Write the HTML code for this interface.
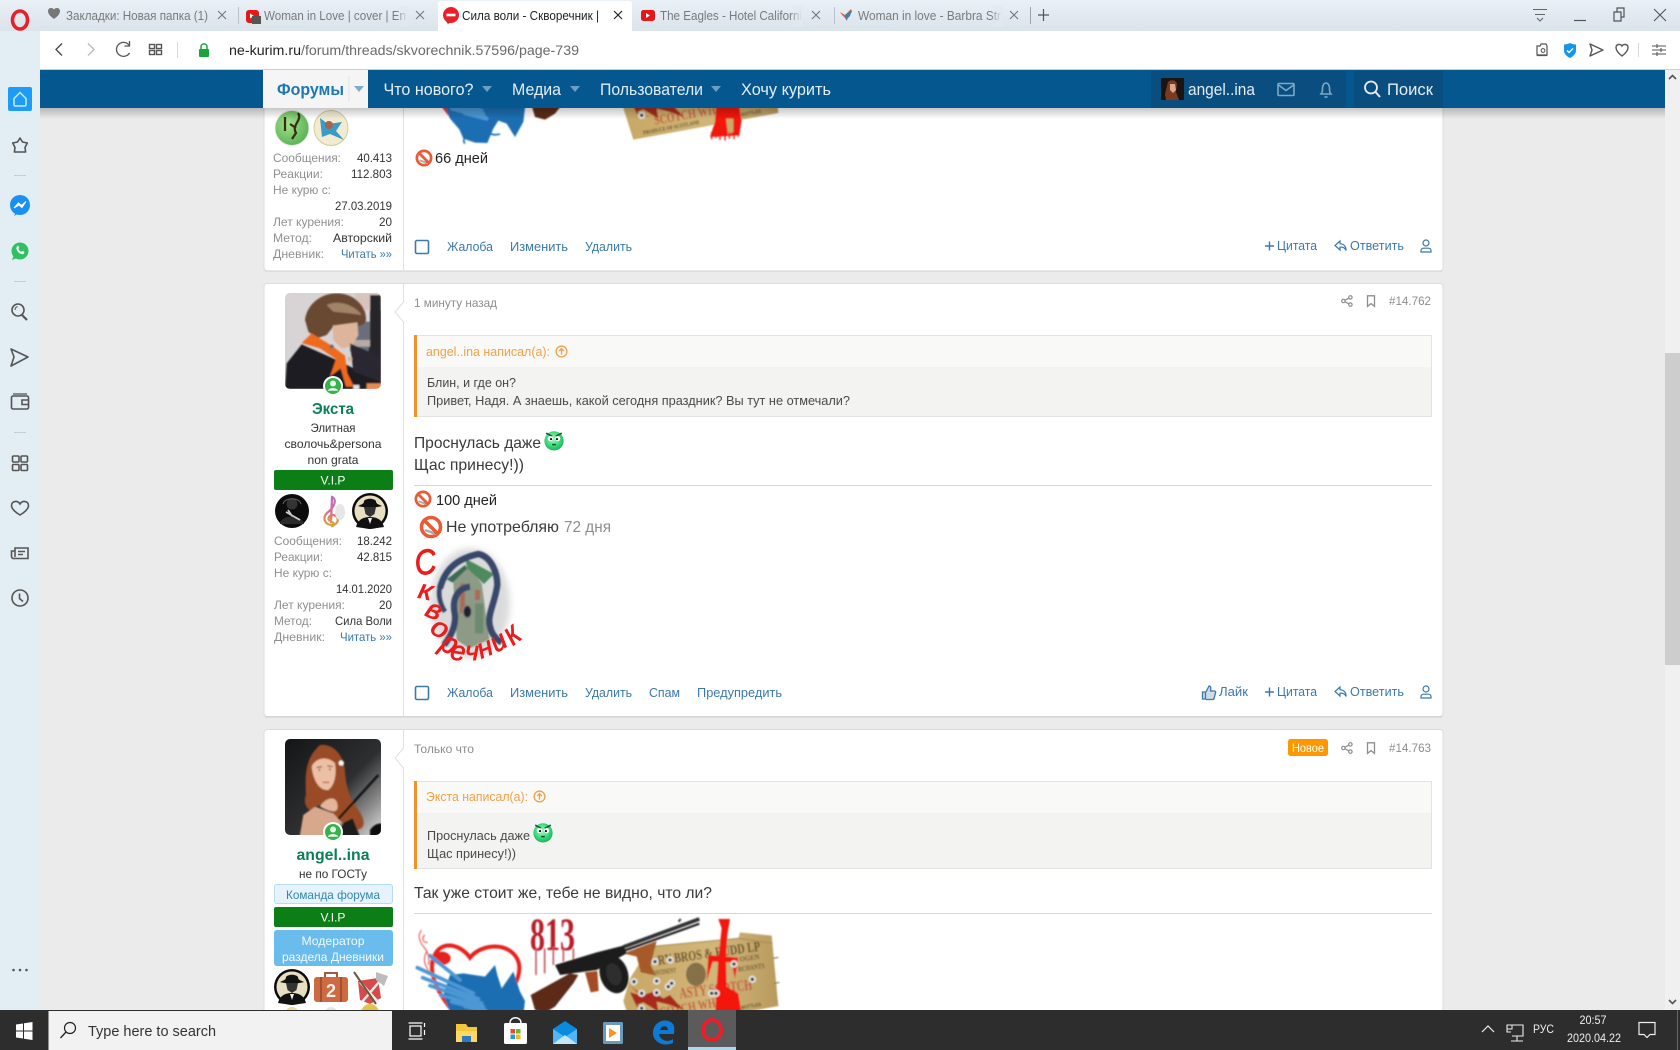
<!DOCTYPE html>
<html lang="ru"><head><meta charset="utf-8"><title>Сила воли - Скворечник</title>
<style>
html,body{margin:0;padding:0;width:1680px;height:1050px;overflow:hidden;background:#ebebeb}
svg{display:block;font-family:"Liberation Sans","DejaVu Sans",sans-serif;filter:blur(.3px)}
.tab{font-size:13px;fill:#7a7a7a}
.l{font-size:12px;fill:#8f8f8f}
.v{font-size:12px;fill:#333}
.a{font-size:13px;fill:#3b78ab}
.m{font-size:16px;fill:#3a3a3a}
.q{font-size:13px;fill:#4a4a4a}
.o{font-size:13px;fill:#f2a045}
.nav{font-size:17px;fill:#e3edf5}
.g{font-size:12px;fill:#8d8d8d}
.c{text-anchor:middle}
.ic{fill:none;stroke:#555;stroke-width:1.4}
.is{fill:none;stroke:#555;stroke-width:1.6}
.rl{font-size:27px;font-style:italic;text-anchor:middle;fill:#ea1c1c;stroke:#ea1c1c;stroke-width:.7}
</style></head><body>
<svg xmlns="http://www.w3.org/2000/svg" width="1680" height="1050" viewBox="0 0 1680 1050">
<defs>
<linearGradient id="tb" x1="0" y1="0" x2="0" y2="1"><stop offset="0" stop-color="#e9f0f6"/><stop offset="1" stop-color="#dbe3eb"/></linearGradient>
<linearGradient id="sh" x1="0" y1="0" x2="0" y2="1"><stop offset="0" stop-color="#000" stop-opacity=".22"/><stop offset="1" stop-color="#000" stop-opacity="0"/></linearGradient>
<linearGradient id="fade" x1="0" y1="0" x2="1" y2="0"><stop offset="0" stop-color="#e2e9f0" stop-opacity="0"/><stop offset="1" stop-color="#e2e9f0"/></linearGradient>
<radialGradient id="sm" cx=".45" cy=".4" r=".6"><stop offset="0" stop-color="#b6f5c8"/><stop offset=".6" stop-color="#3bdc7c"/><stop offset="1" stop-color="#19b35f"/></radialGradient>
<radialGradient id="gm" cx=".4" cy=".4" r=".7"><stop offset="0" stop-color="#a4e08a"/><stop offset="1" stop-color="#4fae4f"/></radialGradient>
<linearGradient id="av2" x1="0" y1="0" x2="1" y2="1"><stop offset="0" stop-color="#141517"/><stop offset=".55" stop-color="#2e2f31"/><stop offset=".8" stop-color="#8c8c8c"/><stop offset="1" stop-color="#dcdcdc"/></linearGradient>
<linearGradient id="cl" x1="0" y1="0" x2="0" y2="1"><stop offset="0" stop-color="#b56fc9"/><stop offset=".5" stop-color="#d86b8e"/><stop offset="1" stop-color="#d9a832"/></linearGradient>
<linearGradient id="cr" x1="0" y1="0" x2="1" y2="0"><stop offset="0" stop-color="#c7a765"/><stop offset=".6" stop-color="#d2b679"/><stop offset="1" stop-color="#b89a5e"/></linearGradient>
<filter id="b2" x="-10%" y="-10%" width="120%" height="120%"><feGaussianBlur stdDeviation="2.200"/></filter>
<filter id="b4" x="-20%" y="-20%" width="140%" height="140%"><feGaussianBlur stdDeviation="10"/></filter>
<clipPath id="cA1"><rect x="285" y="293" width="96" height="96" rx="5"/></clipPath>
<clipPath id="cA2"><rect x="285" y="739" width="96" height="96" rx="5"/></clipPath>
<clipPath id="cA3"><rect x="1161" y="78" width="23" height="22" rx="1"/></clipPath>

<symbol id="nosmoke" viewBox="0 0 24 24" overflow="visible">
<circle cx="12" cy="12" r="9.500" fill="#fff" stroke="#ea5a35" stroke-width="3.600"/>
<path d="M6 15l11 4" stroke="#aaa" stroke-width="2.500"/>
<path d="M5 5l14 14" stroke="#ea5a35" stroke-width="3.600"/>
</symbol>
<symbol id="smile" viewBox="0 0 24 24" overflow="visible">
<circle cx="12" cy="13" r="10.500" fill="url(#sm)"/>
<path d="M3.500 4.500l6.500 3.500M20.500 4.500l-6.500 3.500" stroke="#135f33" stroke-width="1.800"/>
<circle cx="8" cy="10.500" r="2.800" fill="#fff"/><circle cx="16" cy="10.500" r="2.800" fill="#fff"/>
<circle cx="8.800" cy="11" r="1.200" fill="#111"/><circle cx="15.200" cy="11" r="1.200" fill="#111"/>
<path d="M10 17h4" stroke="#0b4d28" stroke-width="1.600"/>
</symbol>
<symbol id="online" viewBox="0 0 20 20" overflow="visible">
<circle cx="10" cy="10" r="10" fill="#fff"/><circle cx="10" cy="10" r="8" fill="#35b34a"/>
<circle cx="10" cy="7.500" r="3" fill="#eaf8ec"/><path d="M4.800 14.800c1-3.600 9.400-3.600 10.400 0z" fill="#eaf8ec"/>
</symbol>
<symbol id="up" viewBox="0 0 12 12" overflow="visible">
<circle cx="6" cy="6" r="5" fill="none" stroke="#f2a045" stroke-width="1.200"/><path d="M6 9V3.500M3.800 5.600 6 3.300l2.200 2.300" fill="none" stroke="#f2a045" stroke-width="1.200"/>
</symbol>
<symbol id="share" viewBox="0 0 12 12" overflow="visible">
<g fill="none" stroke="#8d8d8d" stroke-width="1.200"><circle cx="2.400" cy="6" r="1.700"/><circle cx="9.400" cy="2.400" r="1.700"/><circle cx="9.400" cy="9.600" r="1.700"/><path d="M4 5.200 7.800 3.200M4 6.800l3.800 2"/></g>
</symbol>
<symbol id="bm" viewBox="0 0 12 12" overflow="visible">
<path d="M2.500 .8h7v10.600L6 8.600l-3.500 2.800z" fill="none" stroke="#8d8d8d" stroke-width="1.300"/>
</symbol>
<symbol id="reply" viewBox="0 0 14 14" overflow="visible">
<path d="M6 2 1 6.500 6 11V8.200c3-.3 5 .6 6 3.300 .3-4-2-6.500-6-6.800z" fill="none" stroke="#3b78ab" stroke-width="1.200"/>
</symbol>
<symbol id="person" viewBox="0 0 12 14" overflow="visible">
<g fill="none" stroke="#3b78ab" stroke-width="1.200"><circle cx="6" cy="4" r="3"/><path d="M1 13v-1.400c0-1.500 1.200-2.400 2.600-2.400h4.800c1.400 0 2.600.9 2.600 2.400V13z"/></g>
</symbol>

<g id="sig"><g transform="translate(410 915) scale(.33333)"><g filter="url(#b2)">
<path d="M35 45C20 60 30 85 45 100 55 115 60 130 55 150M45 60c-12 8-6 25 8 22M50 110c-18 30 5 70 35 75" fill="none" stroke="#e6201d" stroke-width="2.500"/>
<path d="M180 128C150 85 90 75 72 125 52 172 82 240 150 312L190 350 225 318C300 250 345 180 322 132 295 80 215 85 180 128z" fill="none" stroke="#e6201d" stroke-width="12"/>
<ellipse cx="95" cy="130" rx="27" ry="20" fill="#e6201d"/>
<path d="M120 180 160 175 225 185 255 150 262 180 275 220 310 170 330 230 345 258 340 300 315 345 290 305 265 296 250 320 232 363 195 362 160 350 148 322 120 290 100 240z" fill="#1a6eb3"/>
<g stroke="#4b98d4" stroke-width="11" stroke-linecap="round"><path d="M60 122 150 195M22 158 190 235M38 188 205 252M60 212 215 265M92 240 220 275M125 260 225 285M165 274 230 290"/></g>
<path d="M225 318c10 15 20 25 45 18M165 345c-5 10-5 15 0 20" fill="none" stroke="#1a6eb3" stroke-width="5"/>

<text x="360" y="105" font-family="'Liberation Serif',serif" font-weight="bold" font-size="140" fill="#b81d26" textLength="135" lengthAdjust="spacingAndGlyphs">813</text>
<path d="M378 100v80M404 100v75M430 95v55M460 100v40M490 100v35" stroke="#c95a5f" stroke-width="5"/>

<path d="M720 95 985 70 990 52 1085 62 1105 273 670 353 640 258 660 190z" fill="url(#cr)"/>
<path d="M985 70 1088 85M720 95 985 70" stroke="#a58a50" stroke-width="3"/>
<path d="M1090 130l15-3M1093 205l15-3" stroke="#7d6a45" stroke-width="3"/>
<text x="745" y="150" transform="rotate(-8 745 150)" font-family="'Liberation Serif',serif" font-weight="bold" font-size="42" fill="#5d4a26" textLength="310" lengthAdjust="spacingAndGlyphs">RY BROS &amp; RUDD LP</text>
<text x="730" y="182" transform="rotate(-8 730 182)" font-family="'Liberation Serif',serif" font-weight="bold" font-size="22" fill="#6b5630" textLength="70" lengthAdjust="spacingAndGlyphs">ONTINENT</text>
<text x="985" y="170" transform="rotate(-8 985 170)" font-family="'Liberation Serif',serif" font-weight="bold" font-size="22" fill="#6b5630" textLength="80" lengthAdjust="spacingAndGlyphs">RCHANTS</text>
<text x="990" y="140" transform="rotate(-8 990 140)" font-family="'Liberation Serif',serif" font-weight="bold" font-size="22" fill="#6b5630" textLength="60" lengthAdjust="spacingAndGlyphs">OGEN</text>
<ellipse cx="858" cy="178" rx="30" ry="35" fill="#6e5a3a" opacity=".75"/>
<text x="810" y="250" transform="rotate(-7 810 250)" font-family="'Liberation Serif',serif" font-weight="bold" font-size="46" fill="#c75a3c" textLength="220" lengthAdjust="spacingAndGlyphs">ASTY SCOTCH</text>
<text x="735" y="308" transform="rotate(-10 735 308)" font-family="'Liberation Serif',serif" font-weight="bold" font-size="40" fill="#c75a3c" textLength="260" lengthAdjust="spacingAndGlyphs">SCOTCH WHISKY</text>
<text x="700" y="338" transform="rotate(-11 700 338)" font-family="'Liberation Serif',serif" font-weight="bold" font-size="17" fill="#5d4a26" textLength="172" lengthAdjust="spacingAndGlyphs">PRODUCE OF SCOTLAND</text>
<text x="995" y="283" transform="rotate(-10 995 283)" font-family="'Liberation Sans',sans-serif" font-weight="bold" font-size="15" fill="#5d4a26" textLength="60" lengthAdjust="spacingAndGlyphs">BOTTLES</text>
<path d="M662 215 700 240 730 230 760 250 780 240 820 285 780 270 740 260 745 290 700 262 680 270 720 285 680 275 660 232 690 240z" fill="#a92a1a"/>
<path d="M925 12 960 12 952 60 948 130 950 215 985 235 995 295 988 340 900 345 915 300 925 130 935 40z" fill="#f2150f"/>
<path d="M895 120 985 128 975 192 965 142 908 140 890 200z" fill="#f2150f"/>
<path d="M948 290h22v40l-16 8z" fill="#c9aa6a"/>
<path d="M905 330v22M918 330v18M930 330v24M945 330v26M958 330v20M972 330v22M985 330v14" stroke="#f2150f" stroke-width="4"/>
<g><g fill="#e4e4e4"><circle cx="735" cy="140" r="11"/><circle cx="780" cy="135" r="11"/><circle cx="672" cy="200" r="11"/><circle cx="740" cy="198" r="11"/><circle cx="785" cy="205" r="11"/><circle cx="775" cy="215" r="11"/><circle cx="695" cy="235" r="11"/><circle cx="740" cy="233" r="11"/><circle cx="905" cy="235" r="11"/><circle cx="918" cy="235" r="11"/><circle cx="972" cy="147" r="11"/><circle cx="1027" cy="193" r="11"/><circle cx="695" cy="280" r="11"/></g>
<g fill="#222"><circle cx="735" cy="140" r="5"/><circle cx="780" cy="135" r="5"/><circle cx="672" cy="200" r="5"/><circle cx="740" cy="198" r="5"/><circle cx="785" cy="205" r="5"/><circle cx="775" cy="215" r="5"/><circle cx="695" cy="235" r="5"/><circle cx="740" cy="233" r="5"/><circle cx="905" cy="235" r="5"/><circle cx="918" cy="235" r="5"/><circle cx="972" cy="147" r="5"/><circle cx="1027" cy="193" r="5"/><circle cx="695" cy="280" r="5"/></g></g>

<path d="M640 115 740 78 722 150 738 182 692 172 680 125z" fill="#a65a2c"/>
<path d="M868 12 640 96" stroke="#333" stroke-width="11"/><path d="M806 20l6-8" stroke="#333" stroke-width="6"/>
<path d="M868 26 640 108" stroke="#222" stroke-width="7"/>
<path d="M435 150 560 112 640 92 650 115 560 165 450 180z" fill="#1f1f1f"/>
<ellipse cx="612" cy="178" rx="42" ry="58" transform="rotate(-18 612 178)" fill="#1d1d1d"/><ellipse cx="612" cy="178" rx="22" ry="34" transform="rotate(-18 612 178)" fill="#2f2f2f"/>
<path d="M525 172 562 168 566 228 542 232z" fill="#a34b20"/>
<path d="M362 240 480 175 505 180 490 205 435 275 405 293 375 285z" fill="#5c2c15"/>
</g></g></g>
</defs>

<!-- page background -->
<rect width="1680" height="1050" fill="#ebebeb"/>

<!-- POST 0 -->
<rect x="264" y="100" width="1179" height="171" rx="3" fill="#fff" stroke="#dcdcdc"/>
<path d="M265 271H1442" stroke="#cfcfcf"/>
<path d="M403.500 100V270" stroke="#e0e0e0"/>
<use href="#sig" y="-893"/>
<ellipse cx="292" cy="128" rx="17" ry="17.500" fill="url(#gm)" stroke="#e8e8e8"/>
<path d="M285 117v14M298 113c5 7-7 12-2 20l-4 6M296 128l-6-4" stroke="#3a2a10" stroke-width="2.200" fill="none"/>
<ellipse cx="331" cy="128" rx="17" ry="17.500" fill="#f2ebd2" stroke="#d8c99a"/>
<path d="M320 118 328 124 342 122 336 131 344 140 330 134 322 137z" fill="#3b9bc4"/><circle cx="329" cy="125" r="4" fill="#a0664e"/>
<text x="273" y="162" class="l" textLength="68" lengthAdjust="spacingAndGlyphs">Сообщения:</text><text x="392" y="162" class="v" text-anchor="end" textLength="35" lengthAdjust="spacingAndGlyphs">40.413</text>
<text x="273" y="178" class="l" textLength="50" lengthAdjust="spacingAndGlyphs">Реакции:</text><text x="392" y="178" class="v" text-anchor="end" textLength="41" lengthAdjust="spacingAndGlyphs">112.803</text>
<text x="273" y="194" class="l" textLength="58" lengthAdjust="spacingAndGlyphs">Не курю с:</text>
<text x="392" y="210" class="v" text-anchor="end" textLength="57" lengthAdjust="spacingAndGlyphs">27.03.2019</text>
<text x="273" y="226" class="l" textLength="71" lengthAdjust="spacingAndGlyphs">Лет курения:</text><text x="392" y="226" class="v" text-anchor="end" textLength="13" lengthAdjust="spacingAndGlyphs">20</text>
<text x="273" y="242" class="l" textLength="39" lengthAdjust="spacingAndGlyphs">Метод:</text><text x="392" y="242" class="v" text-anchor="end" textLength="59" lengthAdjust="spacingAndGlyphs">Авторский</text>
<text x="273" y="258" class="l" textLength="51" lengthAdjust="spacingAndGlyphs">Дневник:</text><text x="392" y="258" class="a" style="font-size:12px" text-anchor="end" textLength="51" lengthAdjust="spacingAndGlyphs">Читать »»</text>
<use href="#nosmoke" x="415" y="149" width="18" height="18"/>
<text x="435" y="163" style="font-size:15px;fill:#222" textLength="53" lengthAdjust="spacingAndGlyphs">66 дней</text>
<rect x="415.500" y="240.500" width="13" height="13" rx="1.500" fill="none" stroke="#3b78ab" stroke-width="1.600"/>
<text x="447" y="251" class="a" textLength="46" lengthAdjust="spacingAndGlyphs">Жалоба</text>
<text x="510" y="251" class="a" textLength="58" lengthAdjust="spacingAndGlyphs">Изменить</text>
<text x="585" y="251" class="a" textLength="47" lengthAdjust="spacingAndGlyphs">Удалить</text>
<path d="M1265 246h9M1269.500 241.500v9" stroke="#3b78ab" stroke-width="1.400"/>
<text x="1277" y="250" class="a" textLength="40" lengthAdjust="spacingAndGlyphs">Цитата</text>
<use href="#reply" x="1334" y="239" width="14" height="14"/>
<text x="1350" y="250" class="a" textLength="54" lengthAdjust="spacingAndGlyphs">Ответить</text>
<use href="#person" x="1420" y="239" width="12" height="14"/>

<!-- POST 1 -->
<rect x="264" y="283.500" width="1179" height="433" rx="3" fill="#fff" stroke="#dcdcdc"/>
<path d="M265 717H1442" stroke="#cfcfcf"/>
<path d="M403.500 284V716" stroke="#e0e0e0"/>
<path d="M403.500 302 395 312 403.500 322z" fill="#fff" stroke="#e0e0e0"/><path d="M404 303v18" stroke="#fff" stroke-width="2"/>
<g clip-path="url(#cA1)">
<rect x="285" y="293" width="96" height="96" fill="#d8d4d6"/>
<g transform="translate(270 285) scale(.33333)"><g filter="url(#b2)">
<rect x="255" y="25" width="80" height="50" fill="#d9c4bd"/>
<rect x="240" y="110" width="70" height="90" fill="#6a6e7c"/>
<path d="M300 30 333 30 333 290 280 290 300 170z" fill="#26262b"/>
<path d="M240 165h60v20h-60z" fill="#b7aca5"/>
<path d="M105 105C110 60 150 25 200 25 250 25 290 60 288 105 285 125 265 120 250 125L190 125 170 150 140 160 115 140z" fill="#6a4a30"/>
<path d="M170 60C200 45 250 55 275 90L240 85 190 80z" fill="#a18468"/>
<path d="M188 122 262 112 265 150 245 185 215 190 190 165z" fill="#dcb59b"/>
<path d="M45 312 50 235 95 178 200 225 333 290 333 312z" fill="#1d1c22"/>
<path d="M240 175 333 215 333 290 250 260z" fill="#2a2830"/>
<path d="M95 174 125 145 185 182 225 212 232 265 252 305 228 305 212 250 180 275 198 222 150 190z" fill="#ee6a1f"/>
<circle cx="240" cy="222" r="7" fill="#d9b59a"/><circle cx="185" cy="185" r="6" fill="#6a6a6a"/>
<path d="M290 295h43v17h-43z" fill="#e88a50"/>
<path d="M250 300h18v12h-18z" fill="#e0e0e0"/>
</g></g>
</g>
<use href="#online" x="323" y="376" width="20" height="20"/>
<text x="333" y="414" class="c" style="font-size:16px;font-weight:bold;fill:#0b7f59" textLength="42" lengthAdjust="spacingAndGlyphs">Экста</text>
<text x="333" y="432" class="c" style="font-size:12px;fill:#333" textLength="45" lengthAdjust="spacingAndGlyphs">Элитная</text>
<text x="333" y="448" class="c" style="font-size:12px;fill:#333" textLength="97" lengthAdjust="spacingAndGlyphs">сволочь&amp;persona</text>
<text x="333" y="464" class="c" style="font-size:12px;fill:#333" textLength="51" lengthAdjust="spacingAndGlyphs">non grata</text>
<rect x="274" y="470" width="119" height="20" rx="2" fill="#0b7f16"/>
<text x="333" y="484.500" class="c" style="font-size:12px;fill:#fff">V.I.P</text>
<circle cx="292" cy="511" r="17" fill="#0c0c0c"/><circle cx="292" cy="504" r="5.500" fill="#333"/><path d="M283 504c2-7 16-7 18 0" fill="none" stroke="#666"/><path d="M280 524c1-10 22-10 24 0z" fill="#2a2a2a"/><path d="M286 512l14 8M288 510l4 6" stroke="#ccc" stroke-width="1.800"/>
<path d="M331 526C335 527 335 522 331 522L332 497C337 499 335 507 327 513 322 518 325 525 332 525 339 525 340 516 333 515 329 515 327 519 330 521" fill="none" stroke="url(#cl)" stroke-width="2.200"/><ellipse cx="340" cy="512" rx="5" ry="8" fill="#e6e6e6"/>
<circle cx="370" cy="511" r="18" fill="#0c0c0c"/><circle cx="370" cy="511" r="15.500" fill="#e8dfc0"/><path d="M358 506c4-2 6-2 6-5 2-3 10-3 12 0 0 3 2 3 6 5-6 2-18 2-24 0z" fill="#111"/><path d="M364 507h12l-1.500 7-4.500 3-4.500-3z" fill="#333"/><path d="M356 527c2-8 8-10 14-10s12 2 14 10l-14 2z" fill="#111"/><path d="M368 518h4l-2 6z" fill="#eee"/>
<text x="274" y="545" class="l" textLength="68" lengthAdjust="spacingAndGlyphs">Сообщения:</text><text x="392" y="545" class="v" text-anchor="end" textLength="35" lengthAdjust="spacingAndGlyphs">18.242</text>
<text x="274" y="561" class="l" textLength="49" lengthAdjust="spacingAndGlyphs">Реакции:</text><text x="392" y="561" class="v" text-anchor="end" textLength="35" lengthAdjust="spacingAndGlyphs">42.815</text>
<text x="274" y="577" class="l" textLength="58" lengthAdjust="spacingAndGlyphs">Не курю с:</text>
<text x="392" y="593" class="v" text-anchor="end" textLength="56" lengthAdjust="spacingAndGlyphs">14.01.2020</text>
<text x="274" y="609" class="l" textLength="71" lengthAdjust="spacingAndGlyphs">Лет курения:</text><text x="392" y="609" class="v" text-anchor="end" textLength="13" lengthAdjust="spacingAndGlyphs">20</text>
<text x="274" y="625" class="l" textLength="38" lengthAdjust="spacingAndGlyphs">Метод:</text><text x="392" y="625" class="v" text-anchor="end" textLength="57" lengthAdjust="spacingAndGlyphs">Сила Воли</text>
<text x="274" y="641" class="l" textLength="51" lengthAdjust="spacingAndGlyphs">Дневник:</text><text x="392" y="641" class="a" style="font-size:12px" text-anchor="end" textLength="52" lengthAdjust="spacingAndGlyphs">Читать »»</text>

<text x="414" y="307" class="g" textLength="83" lengthAdjust="spacingAndGlyphs">1 минуту назад</text>
<use href="#share" x="1341" y="295" width="12" height="12"/>
<use href="#bm" x="1365" y="295" width="12" height="12"/>
<text x="1389" y="305" class="g" textLength="42" lengthAdjust="spacingAndGlyphs">#14.762</text>

<rect x="414.500" y="335.500" width="1017" height="81" fill="#f3f3f1" stroke="#e3e3e1"/>
<rect x="417" y="336" width="1014" height="31" fill="#f9f9f8"/>
<rect x="414" y="335" width="3" height="82" fill="#f0932b"/>
<text x="426" y="356" class="o" textLength="124" lengthAdjust="spacingAndGlyphs">angel..ina написал(а):</text>
<use href="#up" x="555" y="345" width="13" height="13"/>
<text x="427" y="387" class="q" textLength="89" lengthAdjust="spacingAndGlyphs">Блин, и где он?</text>
<text x="427" y="405" class="q" textLength="423" lengthAdjust="spacingAndGlyphs">Привет, Надя. А знаешь, какой сегодня праздник? Вы тут не отмечали?</text>
<text x="414" y="448" class="m" textLength="127" lengthAdjust="spacingAndGlyphs">Проснулась даже</text>
<use href="#smile" x="543" y="429" width="22" height="22"/>
<text x="414" y="470" class="m" textLength="110" lengthAdjust="spacingAndGlyphs">Щас принесу!))</text>
<path d="M414 485.500H1432" stroke="#d8d8d8"/>
<use href="#nosmoke" x="414" y="490" width="18" height="18"/>
<text x="436" y="505" style="font-size:15px;fill:#222" textLength="61" lengthAdjust="spacingAndGlyphs">100 дней</text>
<use href="#nosmoke" x="419" y="515" width="24" height="24"/>
<text x="446" y="532" style="font-size:16px;fill:#3a3a3a" textLength="113" lengthAdjust="spacingAndGlyphs">Не употребляю</text>
<text x="564" y="532" style="font-size:16px;fill:#8c8c8c" textLength="47" lengthAdjust="spacingAndGlyphs">72 дня</text>

<!-- birdhouse -->
<g transform="translate(410 540) scale(.33333)">
<ellipse cx="180" cy="190" rx="120" ry="165" fill="#bdbdbd" opacity=".55" filter="url(#b4)"/>
<g filter="url(#b2)">
<path d="M130 125 175 80 215 130 238 298 178 325 140 300z" fill="#8d9a86"/>
<path d="M150 130h15v90h-15zM195 150h15v30h-15z" fill="#a86a58"/>
<path d="M195 190h25v90h-25z" fill="#6d8a70"/>
<path d="M165 75 110 118 128 128 172 85z" fill="#3d6b52"/><path d="M165 55 252 102 222 132 172 85z" fill="#4e8a5c"/>
<path d="M90 145C105 85 145 55 205 42 245 50 262 100 262 135 255 190 230 225 240 260 245 285 262 300 275 308" fill="none" stroke="#39476b" stroke-width="19"/>
<path d="M180 140C140 145 125 180 135 225 138 265 118 295 102 315" fill="none" stroke="#39476b" stroke-width="19"/>
<path d="M90 140C82 170 95 200 105 215" fill="none" stroke="#39476b" stroke-width="14"/>
<ellipse cx="172" cy="215" rx="13" ry="19" fill="#1c2434" stroke="#8a8a7a" stroke-width="4"/>
</g></g>
<text class="rl" transform="translate(427 574) rotate(-8) scale(1.100 1.300)">С</text>
<text class="rl" transform="translate(424 599) rotate(12) scale(1.100 1)">к</text>
<text class="rl" transform="translate(431 618) rotate(22) scale(1.100 1)">в</text>
<text class="rl" transform="translate(436 636) rotate(28) scale(1.100 1)">о</text>
<text class="rl" transform="translate(445 652) rotate(30) scale(1 1.100)">р</text>
<text class="rl" transform="translate(457 660) rotate(8)">е</text>
<text class="rl" transform="translate(472 660) rotate(0)">ч</text>
<text class="rl" transform="translate(488 656) rotate(-22)">н</text>
<text class="rl" transform="translate(503 649) rotate(-32)">и</text>
<text class="rl" transform="translate(518 642) rotate(-38) scale(1 1.200)">к</text>

<rect x="415.500" y="686.500" width="13" height="13" rx="1.500" fill="none" stroke="#3b78ab" stroke-width="1.600"/>
<text x="447" y="697" class="a" textLength="46" lengthAdjust="spacingAndGlyphs">Жалоба</text>
<text x="510" y="697" class="a" textLength="58" lengthAdjust="spacingAndGlyphs">Изменить</text>
<text x="585" y="697" class="a" textLength="47" lengthAdjust="spacingAndGlyphs">Удалить</text>
<text x="649" y="697" class="a" textLength="31" lengthAdjust="spacingAndGlyphs">Спам</text>
<text x="697" y="697" class="a" textLength="85" lengthAdjust="spacingAndGlyphs">Предупредить</text>
<path d="M1202.500 692v7h3v-7zM1206 692l3-6c2 0 2 2 1.500 5h4c1 0 1.500 1 1 2l-1.500 5.500c-.3.8-.8 1-1.500 1H1206" fill="#3b78ab" stroke="#3b78ab" stroke-width="1.300" fill-opacity=".25"/>
<text x="1219" y="696" class="a" textLength="29" lengthAdjust="spacingAndGlyphs">Лайк</text>
<path d="M1265 692h9M1269.500 687.500v9" stroke="#3b78ab" stroke-width="1.400"/>
<text x="1277" y="696" class="a" textLength="40" lengthAdjust="spacingAndGlyphs">Цитата</text>
<use href="#reply" x="1334" y="685" width="14" height="14"/>
<text x="1350" y="696" class="a" textLength="54" lengthAdjust="spacingAndGlyphs">Ответить</text>
<use href="#person" x="1420" y="685" width="12" height="14"/>

<!-- POST 2 -->
<rect x="264" y="729.500" width="1179" height="340" rx="3" fill="#fff" stroke="#dcdcdc"/>
<path d="M403.500 730V1010" stroke="#e0e0e0"/>
<path d="M403.500 748 395 758 403.500 768z" fill="#fff" stroke="#e0e0e0"/><path d="M404 749v18" stroke="#fff" stroke-width="2"/>
<g clip-path="url(#cA2)">
<rect x="285" y="739" width="96" height="96" fill="url(#av2)"/>
<g transform="translate(270 735) scale(.33333)"><g filter="url(#b2)">
<path d="M90 300 100 240 135 215 190 235 215 262 190 312 88 312z" fill="#d8a88c"/>
<path d="M108 180C105 120 105 70 150 30 190 25 222 60 225 110 228 150 235 185 265 225 290 260 285 285 255 285 225 270 195 245 180 222 165 200 130 215 120 225 108 220 100 200 108 180z" fill="#9a4c28"/>
<path d="M125 95C135 70 170 60 195 85 200 115 195 150 175 165 150 168 130 140 125 95z" fill="#ecc0a4"/>
<path d="M140 98l16-3M172 93l16 2" stroke="#6a3a22" stroke-width="3"/>
<circle cx="148" cy="105" r="2.500" fill="#333"/><circle cx="180" cy="103" r="2.500" fill="#333"/>
<path d="M158 142h20" stroke="#c0645a" stroke-width="4"/>
<path d="M150 215C160 195 190 180 200 200 210 230 195 240 150 215z" fill="#e3b59a"/>
<path d="M325 120 205 252" stroke="#0c0c0c" stroke-width="7"/>
<path d="M195 312 222 262 248 250 268 300 262 312z" fill="#1a1a1a"/>
<circle cx="214" cy="84" r="8" fill="#f5f5f5"/>
<path d="M300 285c10-15 22-20 35-20v47h-35z" fill="#111"/>
</g></g>
</g>
<use href="#online" x="323" y="822" width="20" height="20"/>
<text x="333" y="860" class="c" style="font-size:16px;font-weight:bold;fill:#0b7f59" textLength="73" lengthAdjust="spacingAndGlyphs">angel..ina</text>
<text x="333" y="878" class="c" style="font-size:12px;fill:#333" textLength="68" lengthAdjust="spacingAndGlyphs">не по ГОСТу</text>
<rect x="274.500" y="884.500" width="118" height="19" rx="2.500" fill="#e6f3fd" stroke="#b4dcf7"/>
<text x="333" y="899" class="c" style="font-size:12px;fill:#3286ad" textLength="94" lengthAdjust="spacingAndGlyphs">Команда форума</text>
<rect x="274" y="907" width="119" height="20" rx="2" fill="#0b7f16"/>
<text x="333" y="921.500" class="c" style="font-size:12px;fill:#fff">V.I.P</text>
<rect x="274" y="930" width="119" height="36" rx="3" fill="#69bcec"/>
<text x="333" y="945" class="c" style="font-size:12px;fill:#f3fafe" textLength="63" lengthAdjust="spacingAndGlyphs">Модератор</text>
<text x="333" y="961" class="c" style="font-size:12px;fill:#f3fafe" textLength="102" lengthAdjust="spacingAndGlyphs">раздела Дневники</text>
<circle cx="292" cy="987" r="18" fill="#0c0c0c"/><circle cx="292" cy="987" r="15.500" fill="#e8dfc0"/><path d="M280 982c4-2 6-2 6-5 2-3 10-3 12 0 0 3 2 3 6 5-6 2-18 2-24 0z" fill="#111"/><path d="M286 983h12l-1.500 7-4.500 3-4.500-3z" fill="#333"/><path d="M278 1003c2-8 8-10 14-10s12 2 14 10l-14 2z" fill="#111"/><path d="M290 994h4l-2 6z" fill="#eee"/>
<rect x="314" y="977" width="34" height="25" rx="3" fill="#cd6a42"/><path d="M325 977v-4h12v4" fill="none" stroke="#a5583a" stroke-width="2"/><path d="M321 977v25M341 977v25" stroke="#8e4a2c" stroke-width="1.500"/><text x="331" y="997" class="c" style="font-size:18px;font-weight:bold;fill:#f4f0ea">2</text>
<path d="M358 981 378 978 381 998 370 1004 360 1000z" fill="#d74a4a"/><path d="M360 982 378 1002M379 982 362 1002" stroke="#eee" stroke-width="2.500"/><path d="M354 972 376 1004" stroke="#6b5a3c" stroke-width="2"/><path d="M376 972l12 4-4 10-8-6z" fill="#bcbcbc"/>
<circle cx="370" cy="1013" r="9" fill="#e3c24f"/>
<circle cx="331" cy="1013" r="6" fill="#e4e4e4"/>
<circle cx="292" cy="1014" r="7" fill="#eadf9a"/>

<text x="414" y="753" class="g" textLength="60" lengthAdjust="spacingAndGlyphs">Только что</text>
<rect x="1288" y="739" width="40" height="17" rx="2.500" fill="#ff9800"/>
<text x="1308" y="752" class="c" style="font-size:12px;fill:#fff" textLength="32" lengthAdjust="spacingAndGlyphs">Новое</text>
<use href="#share" x="1341" y="742" width="12" height="12"/>
<use href="#bm" x="1365" y="742" width="12" height="12"/>
<text x="1389" y="752" class="g" textLength="42" lengthAdjust="spacingAndGlyphs">#14.763</text>

<rect x="414.500" y="781.500" width="1017" height="87" fill="#f3f3f1" stroke="#e3e3e1"/>
<rect x="417" y="782" width="1014" height="31" fill="#f9f9f8"/>
<rect x="414" y="781" width="3" height="88" fill="#f0932b"/>
<text x="426" y="801" class="o" textLength="102" lengthAdjust="spacingAndGlyphs">Экста написал(а):</text>
<use href="#up" x="533" y="790" width="13" height="13"/>
<text x="427" y="840" class="q" textLength="103" lengthAdjust="spacingAndGlyphs">Проснулась даже</text>
<use href="#smile" x="532" y="821" width="22" height="22"/>
<text x="427" y="858" class="q" textLength="89" lengthAdjust="spacingAndGlyphs">Щас принесу!))</text>
<text x="414" y="898" class="m" textLength="298" lengthAdjust="spacingAndGlyphs">Так уже стоит же, тебе не видно, что ли?</text>
<path d="M414 913.500H1432" stroke="#d8d8d8"/>
<use href="#sig"/>

<!-- NAV -->
<rect x="40" y="108" width="1625" height="11" fill="url(#sh)"/>
<rect x="40" y="70" width="1625" height="38" fill="#05588f"/>
<rect x="263" y="70" width="105" height="38" fill="#f5f5f5"/>
<text x="277" y="95" style="font-size:17px;font-weight:bold;fill:#1b78b4" textLength="67" lengthAdjust="spacingAndGlyphs">Форумы</text>
<path d="M349 76v26" stroke="#e2e2e2"/>
<path d="M354 86h10l-5 6z" fill="#7cadcf"/>
<text x="383.500" y="95" class="nav" textLength="90" lengthAdjust="spacingAndGlyphs">Что нового?</text>
<path d="M482 86h10l-5 6z" fill="#6d9dc2"/>
<text x="512" y="95" class="nav" textLength="49" lengthAdjust="spacingAndGlyphs">Медиа</text>
<path d="M570 86h10l-5 6z" fill="#6d9dc2"/>
<text x="600" y="95" class="nav" textLength="103" lengthAdjust="spacingAndGlyphs">Пользователи</text>
<path d="M711 86h10l-5 6z" fill="#6d9dc2"/>
<text x="741" y="95" class="nav" textLength="90" lengthAdjust="spacingAndGlyphs">Хочу курить</text>
<rect x="1151" y="71" width="195" height="37" fill="#0a4e80"/>
<rect x="1354" y="71" width="89" height="37" fill="#0a4e80"/>
<g clip-path="url(#cA3)"><rect x="1161" y="78" width="23" height="22" fill="#1a1412"/><path d="M1168 82c3-3 8-2 9 2l-1 8 3 8h-13l-1-6z" fill="#7c3a1d"/><path d="M1170 84h5l1 6-3 3-3-3z" fill="#d9a88d"/></g>
<text x="1188" y="95" class="nav" textLength="67" lengthAdjust="spacingAndGlyphs">angel..ina</text>
<rect x="1278" y="83.500" width="16" height="12" rx="1" fill="none" stroke="#7ea8c8" stroke-width="1.600"/><path d="M1278.500 85 1286 90.500 1293.500 85" fill="none" stroke="#7ea8c8" stroke-width="1.600"/>
<path d="M1321 94c1.500-2 1.500-3 1.500-6 0-2.500 1.500-5 3.500-5s3.500 2.500 3.500 5c0 3 0 4 1.500 6z" fill="none" stroke="#7ea8c8" stroke-width="1.600"/><path d="M1324.500 97h3" stroke="#7ea8c8" stroke-width="1.600"/>
<circle cx="1371" cy="87.500" r="6" fill="none" stroke="#e3edf5" stroke-width="1.800"/><path d="M1375.500 92 1380 97" stroke="#e3edf5" stroke-width="2"/>
<text x="1387" y="95" class="nav" textLength="46" lengthAdjust="spacingAndGlyphs">Поиск</text>

<!-- scrollbar -->
<rect x="1665" y="70" width="15" height="940" fill="#f0f0f0"/>
<rect x="1665" y="353" width="15" height="312" fill="#cdcdcd"/>
<path d="M1669 79l3.500-3.500L1676 79" fill="none" stroke="#555" stroke-width="1.600"/>
<path d="M1669 1000l3.500 3.500 3.500-3.500" fill="none" stroke="#555" stroke-width="1.600"/>

<!-- SIDEBAR -->
<rect x="0" y="0" width="40" height="1010" fill="#e3edf4"/>
<rect x="8" y="87" width="24" height="24" rx="2" fill="#1c9cf6"/>
<path d="M14 98.500 20 92.500l6 6v6c0 1-.6 1.500-1.500 1.500h-9c-.9 0-1.500-.5-1.500-1.500z" fill="none" stroke="#c9ecff" stroke-width="1.500"/>
<path d="M20 138l2.500 4 4.800 1-2.300 4.500.6 4.500h-11.200l.6-4.500-2.300-4.500 4.800-1z" class="is" stroke-linejoin="round"/>
<path d="M14 175.500h12" stroke="#c4ced6"/>
<circle cx="20" cy="205" r="10" fill="#1a90f0"/><path d="M14 216l2-4h5z" fill="#1a90f0"/><path d="M14 208l4.500-5 3 2.500 4.500-4-4 6-3-2.500z" fill="#fff" stroke="#fff"/>
<circle cx="20" cy="251" r="8.500" fill="#2fc161"/><path d="M12 260l2-5 3 3z" fill="#2fc161"/><path d="M16.500 247c-1 3 3 8 7 7l1-2-2.200-1.200-1 1c-1.500-.5-2.500-2-3-3l1-1-1.200-2.300z" fill="#fff"/>
<path d="M14 281.500h12" stroke="#c4ced6"/>
<circle cx="18" cy="310" r="6" class="is"/><path d="M22 315l5 5" stroke="#555" stroke-width="2.200"/><path d="M15 310c0-2 1-3 2.500-3.500" fill="none" stroke="#555"/>
<path d="M11 349 28 357 11 366 14 357z" class="is" stroke-linejoin="round"/>
<rect x="11.500" y="396" width="17" height="13" rx="1.500" class="is"/><path d="M28 400h-6v4.500h6" class="is"/><path d="M13 394h14" stroke="#555" stroke-width="1.300"/>
<path d="M14 432.500h12" stroke="#c4ced6"/>
<g class="is"><rect x="12.500" y="456" width="6.500" height="6" rx="1"/><rect x="21" y="456" width="6.500" height="6" rx="1"/><rect x="12.500" y="464.500" width="6.500" height="6" rx="1"/><rect x="21" y="464.500" width="6.500" height="6" rx="1"/></g>
<path d="M20 515c-5-3-8.500-6-8.500-9.500 0-4.500 6-5.500 8.500-1.500 2.500-4 8.500-3 8.500 1.500 0 3.500-3.500 6.500-8.500 9.500z" class="is"/>
<path d="M15 548h13v10.500H13.500c-1 0-2-1-2-2V551h3.500zM15 551v6M18 551.500h7M18 554.500h5" class="is"/>
<circle cx="20" cy="598" r="8" class="is"/><path d="M19.500 593.500v5l3.500 3" class="is"/>
<g fill="#555"><circle cx="13.500" cy="970" r="1.300"/><circle cx="20" cy="970" r="1.300"/><circle cx="26.500" cy="970" r="1.300"/></g>

<!-- TAB STRIP -->
<rect x="0" y="0" width="1680" height="31" fill="url(#tb)"/>
<rect x="0" y="31" width="40" height="10" fill="#e3edf4"/>
<ellipse cx="20" cy="20" rx="7.500" ry="9" fill="none" stroke="#e8202a" stroke-width="3.600"/>
<path d="M54 19c-3.500-2.500-6-5-6-8 0-3.500 4.500-4 6-1.500 1.500-2.500 6-2 6 1.500 0 3-2.500 5.500-6 8z" fill="#777"/>
<text x="66" y="20" class="tab" textLength="142" lengthAdjust="spacingAndGlyphs">Закладки: Новая папка (1)</text>
<path d="M218 11l8 8M226 11l-8 8" stroke="#777" stroke-width="1.100"/>
<path d="M238.500 7v17" stroke="#b9c3cc"/>
<rect x="246" y="10" width="13" height="13" rx="3" fill="#e41818"/><path d="M250 13.500v5l4-2.500z" fill="#fff"/><rect x="252" y="16" width="9" height="8" fill="#555"/>
<text x="264" y="20" class="tab" textLength="142" lengthAdjust="spacingAndGlyphs">Woman in Love | cover | En</text>
<rect x="396" y="6" width="12" height="20" fill="url(#fade)"/>
<path d="M416 11l8 8M424 11l-8 8" stroke="#777" stroke-width="1.100"/>
<path d="M438 31V4c0-2 1-3 3-3h188c2 0 3 1 3 3v27z" fill="#fff"/>
<circle cx="451" cy="15" r="8" fill="#e8202a"/><rect x="446.500" y="13.700" width="9" height="2.600" fill="#fff"/><path d="M445 20l3 4 3-2z" fill="#e8202a"/>
<text x="462" y="20" class="tab" style="fill:#222" textLength="137" lengthAdjust="spacingAndGlyphs">Сила воли - Скворечник |</text>
<path d="M614 11l8 8M622 11l-8 8" stroke="#222" stroke-width="1.200"/>
<rect x="641" y="10" width="14" height="11" rx="2.500" fill="#e41818"/><path d="M646 13v5l4-2.500z" fill="#fff"/>
<text x="660" y="20" class="tab" textLength="142" lengthAdjust="spacingAndGlyphs">The Eagles - Hotel Californi</text>
<rect x="790" y="6" width="12" height="20" fill="url(#fade)"/>
<path d="M812 11l8 8M820 11l-8 8" stroke="#777" stroke-width="1.100"/>
<path d="M834.500 7v17" stroke="#b9c3cc"/>
<path d="M840 12l5 3 6-6 1 3-4 4-1 5-2-3-3-3z" fill="#d9683a"/><path d="M845 15l7-5-2 6-4 4z" fill="#3c7fb0"/>
<text x="858" y="20" class="tab" textLength="143" lengthAdjust="spacingAndGlyphs">Woman in love - Barbra Str</text>
<rect x="990" y="6" width="12" height="20" fill="url(#fade)"/>
<path d="M1010 11l8 8M1018 11l-8 8" stroke="#777" stroke-width="1.100"/>
<path d="M1030.500 7v17" stroke="#98a3ad"/>
<path d="M1043.500 9v12M1038 15h11" stroke="#555" stroke-width="1.200"/>
<path d="M1533 9.500h14M1535 14.500h10M1537 18l3 3 3-3" fill="none" stroke="#666" stroke-width="1.100"/>
<path d="M1574 20.500h12" stroke="#555" stroke-width="1.200"/>
<path d="M1614 12h7v9h-7zM1617 12V8h7v9h-3" fill="none" stroke="#555" stroke-width="1.200"/>
<path d="M1654 9l12 12M1666 9l-12 12" stroke="#555" stroke-width="1.100"/>

<!-- ADDRESS BAR -->
<rect x="40" y="31" width="1640" height="38" fill="#fff"/>
<path d="M40 69.500H1680" stroke="#c5d0da"/>
<path d="M62 43.500l-6 6 6 6" fill="none" stroke="#444" stroke-width="1.300"/>
<path d="M88 43.500l6 6-6 6" fill="none" stroke="#b9b9b9" stroke-width="1.300"/>
<path d="M129 45a7 7 0 1 0 .5 8M129.500 41v5h-5" fill="none" stroke="#555" stroke-width="1.300"/>
<g class="ic"><rect x="149.500" y="44.500" width="5" height="4"/><rect x="156.500" y="44.500" width="5" height="4"/><rect x="149.500" y="50.500" width="5" height="4"/><rect x="156.500" y="50.500" width="5" height="4"/></g>
<path d="M177.500 42v16" stroke="#d8d8d8"/>
<rect x="199" y="49" width="10" height="8" rx="1" fill="#19a53c"/><path d="M201 49v-2.500c0-3.500 6-3.500 6 0V49" fill="none" stroke="#19a53c" stroke-width="1.500"/>
<text x="229" y="55" style="font-size:14px;fill:#222" textLength="72" lengthAdjust="spacingAndGlyphs">ne-kurim.ru</text>
<text x="301" y="55" style="font-size:14px;fill:#6a6a6a" textLength="278" lengthAdjust="spacingAndGlyphs">/forum/threads/skvorechnik.57596/page-739</text>
<path d="M1537 46h3l1-2h5l1 2h0v9h-10zM1537 55.500h10" fill="none" stroke="#555" stroke-width="1.200"/><circle cx="1543" cy="50.500" r="1.900" fill="none" stroke="#555"/>
<path d="M1564 44.500c2 0 4-.5 6-1.500 2 1 4 1.500 6 1.500v6c0 3.500-3 6-6 7.500-3-1.500-6-4-6-7.500z" fill="#1795ec"/><path d="M1567 50.500l2 2 4-4" fill="none" stroke="#fff" stroke-width="1.300"/>
<path d="M1590 44l13 6-13 6 2-6z" class="ic" stroke-linejoin="round"/>
<path d="M1622 56c-4-3-6-6-6-8.500 0-3.500 4.500-4 6-1.500 1.500-2.500 6-2 6 1.500 0 2.500-2 5.500-6 8.500z" class="ic"/>
<path d="M1638.500 43v14" stroke="#d8d8d8"/>
<path d="M1652 46h14M1652 50h14M1652 54h14M1657 44v4M1661 48v4M1657 52v4" stroke="#555" stroke-width="1.100"/>

<!-- TASKBAR -->
<rect x="0" y="1010" width="1680" height="40" fill="#2d2d2d"/>
<g fill="#fff"><path d="M16 1024.500l7-1v7h-7zM24 1023.300l8.500-1.300v8.500H24zM16 1031.500h7v7l-7-1zM24 1031.500h8.500v8.500l-8.500-1.300z"/></g>
<rect x="48.500" y="1011" width="343.500" height="39" fill="#f2f2f2"/>
<circle cx="70" cy="1028" r="5.500" fill="none" stroke="#222" stroke-width="1.200"/><path d="M66 1032l-5.500 6" stroke="#222" stroke-width="1.300"/>
<text x="88" y="1036" style="font-size:15px;fill:#333" textLength="128" lengthAdjust="spacingAndGlyphs">Type here to search</text>
<g fill="none" stroke="#fff" stroke-width="1.200"><rect x="410" y="1026" width="11" height="10"/><path d="M408.500 1023h14M408.500 1039h14M424.500 1023v4M424.500 1030v5"/></g>
<path d="M456 1024h10l2 3h9v15h-21z" fill="#f4c63b"/><path d="M456 1031h21v11h-21z" fill="#ffd767"/><rect x="462" y="1036" width="9" height="6" fill="#2d7bbf"/>
<rect x="504" y="1023" width="23" height="21" rx="1.500" fill="#fff"/><path d="M510 1023c0-7 11-7 11 0" fill="none" stroke="#fff" stroke-width="1.500"/><rect x="510.500" y="1029" width="4.500" height="4.500" fill="#e74b26"/><rect x="516" y="1029" width="4.500" height="4.500" fill="#6ebb2f"/><rect x="510.500" y="1034.500" width="4.500" height="4.500" fill="#1e9be0"/><rect x="516" y="1034.500" width="4.500" height="4.500" fill="#f9b813"/>
<path d="M553 1029l12-8 12 8v15h-24z" fill="#0a8be0"/><path d="M553 1029l12 8 12-8v15h-24z" fill="#53b6f4"/><path d="M553 1044l12-9 12 9z" fill="#bfe6fb"/>
<rect x="603" y="1022" width="20" height="22" rx="1.500" fill="#6c9abc"/><rect x="606" y="1025" width="14" height="16" fill="#fff"/><path d="M609 1028l8 5-8 5z" fill="#f79721"/>
<path d="M674 1034h-15c.5 6 9 9 14 5v4c-8 4-20 0-20-10 0-12 14-16 20-9 1.500 2 1.500 6 1 10zM660 1030h8c0-5-7-5-8 0z" fill="#0f79d6"/>
<rect x="688" y="1010" width="48" height="40" fill="#5b5b5b"/><rect x="688" y="1047" width="48" height="3" fill="#a9d8f4"/>
<ellipse cx="712" cy="1030" rx="9" ry="10" fill="none" stroke="#e8202a" stroke-width="4"/>
<path d="M1482 1032l6-6 6 6" fill="none" stroke="#eee" stroke-width="1.200"/>
<path d="M1507 1025h16v11h-11M1507 1025v7h4M1517 1036v5M1511 1041h12" fill="none" stroke="#eee" stroke-width="1.100"/><rect x="1507" y="1025" width="5" height="4" fill="none" stroke="#eee"/>
<text x="1533" y="1033" style="font-size:12px;fill:#eee" textLength="21" lengthAdjust="spacingAndGlyphs">РУС</text>
<text x="1593" y="1024" class="c" style="font-size:12px;fill:#eee" textLength="27" lengthAdjust="spacingAndGlyphs">20:57</text>
<text x="1594" y="1042" class="c" style="font-size:12px;fill:#eee" textLength="54" lengthAdjust="spacingAndGlyphs">2020.04.22</text>
<path d="M1639 1022.500h16v12h-5l-3 3-3-3h-5z" fill="none" stroke="#eee" stroke-width="1.200"/>
<path d="M1677.500 1010v40" stroke="#666"/>
</svg>
</body></html>
